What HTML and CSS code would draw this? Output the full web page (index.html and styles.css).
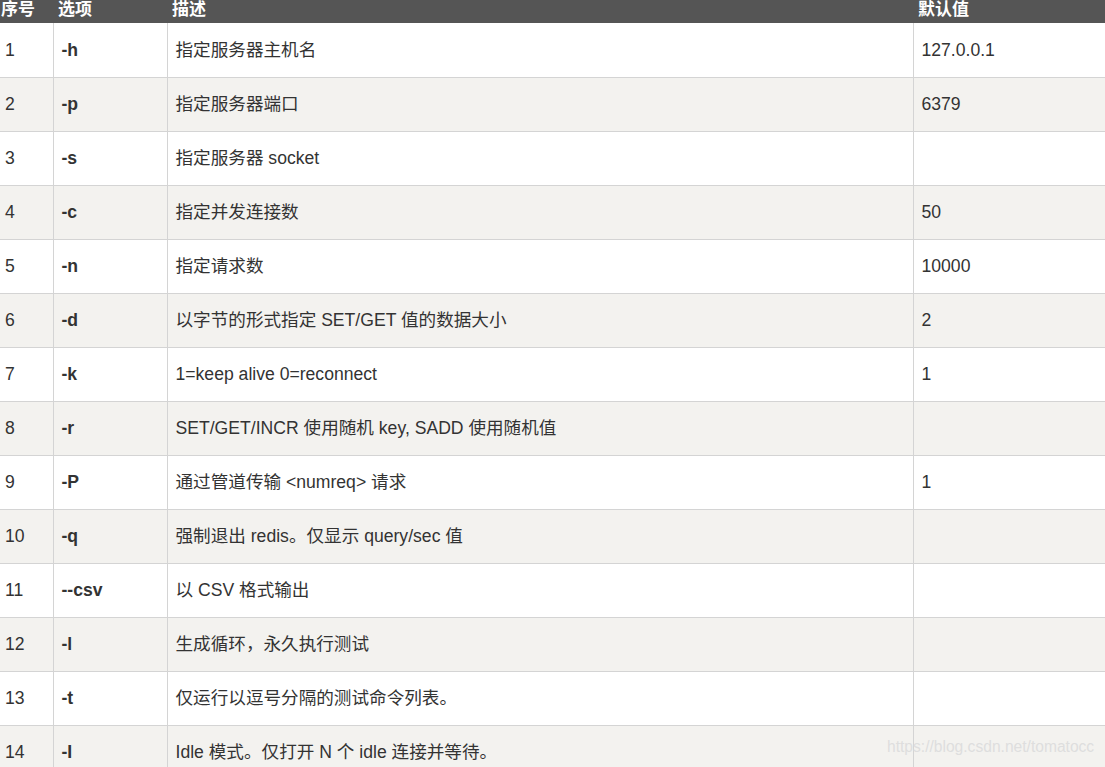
FILE: index.html
```
<!DOCTYPE html>
<html lang="zh">
<head>
<meta charset="utf-8">
<link rel="stylesheet" href="styles.css">
</head>
<body>
<div class="wrap">
<table class="opts">
<colgroup><col class="c1"><col class="c2"><col class="c3"><col class="c4"></colgroup>
<thead>
<tr><th>序号</th><th>选项</th><th>描述</th><th>默认值</th></tr>
</thead>
<tbody>
<tr><td>1</td><td class="opt">-h</td><td>指定服务器主机名</td><td>127.0.0.1</td></tr>
<tr><td>2</td><td class="opt">-p</td><td>指定服务器端口</td><td>6379</td></tr>
<tr><td>3</td><td class="opt">-s</td><td>指定服务器 socket</td><td></td></tr>
<tr><td>4</td><td class="opt">-c</td><td>指定并发连接数</td><td>50</td></tr>
<tr><td>5</td><td class="opt">-n</td><td>指定请求数</td><td>10000</td></tr>
<tr><td>6</td><td class="opt">-d</td><td>以字节的形式指定 SET/GET 值的数据大小</td><td>2</td></tr>
<tr><td>7</td><td class="opt">-k</td><td>1=keep alive 0=reconnect</td><td>1</td></tr>
<tr><td>8</td><td class="opt">-r</td><td>SET/GET/INCR 使用随机 key, SADD 使用随机值</td><td></td></tr>
<tr><td>9</td><td class="opt">-P</td><td>通过管道传输 &lt;numreq&gt; 请求</td><td>1</td></tr>
<tr><td>10</td><td class="opt">-q</td><td>强制退出 redis。仅显示 query/sec 值</td><td></td></tr>
<tr><td>11</td><td class="opt">--csv</td><td>以 CSV 格式输出</td><td></td></tr>
<tr><td>12</td><td class="opt">-l</td><td>生成循环，永久执行测试</td><td></td></tr>
<tr><td>13</td><td class="opt">-t</td><td>仅运行以逗号分隔的测试命令列表。</td><td></td></tr>
<tr><td>14</td><td class="opt">-I</td><td>Idle 模式。仅打开 N 个 idle 连接并等待。</td><td></td></tr>
</tbody>
</table>
<div class="watermark">https://blog.csdn.net/tomatocc</div>
</div>
</body>
</html>
```
FILE: styles.css
```
html, body {
  margin: 0;
  padding: 0;
  background: #fff;
  overflow: hidden;
}
body {
  width: 1105px;
  height: 767px;
  font-family: "Liberation Sans", Arial, "Noto Sans CJK SC", sans-serif;
  color: #333;
}
.wrap {
  position: relative;
  width: 1105px;
  height: 767px;
  overflow: hidden;
}
.opts {
  border-collapse: collapse;
  table-layout: fixed;
  width: 1105px;
  font-size: 17.6px;
}
.c1 { width: 53px; }
.c2 { width: 114px; }
.c3 { width: 746px; }
.c4 { width: 192px; }
.opts th {
  background: #555;
  color: #fff;
  font-weight: bold;
  font-size: 17px;
  text-align: left;
  height: 23px;
  padding: 0 5px 4px 5px;
  line-height: 19px;
  box-sizing: border-box;
  vertical-align: top;
  white-space: nowrap;
}
.opts th:first-child { padding-left: 1px; }
.opts td {
  height: 54px;
  box-sizing: border-box;
  padding: 0 8px;
  border: 1px solid #d4d4d4;
  vertical-align: middle;
  white-space: nowrap;
  line-height: 20px;
}
.opts tr td:first-child { border-left: none; padding-left: 5px; }
.opts tr td:last-child { border-right: none; }
.opts tbody tr:first-child td { border-top: none; }
.opts tbody tr:nth-child(even) td { background: #f3f2ef; }
.opts td.opt { font-weight: bold; }
.watermark {
  position: absolute;
  left: 887px;
  top: 738px;
  font-size: 15.6px;
  color: #dedede;
  white-space: nowrap;
  font-family: "Liberation Sans", Arial, sans-serif;
}
```
